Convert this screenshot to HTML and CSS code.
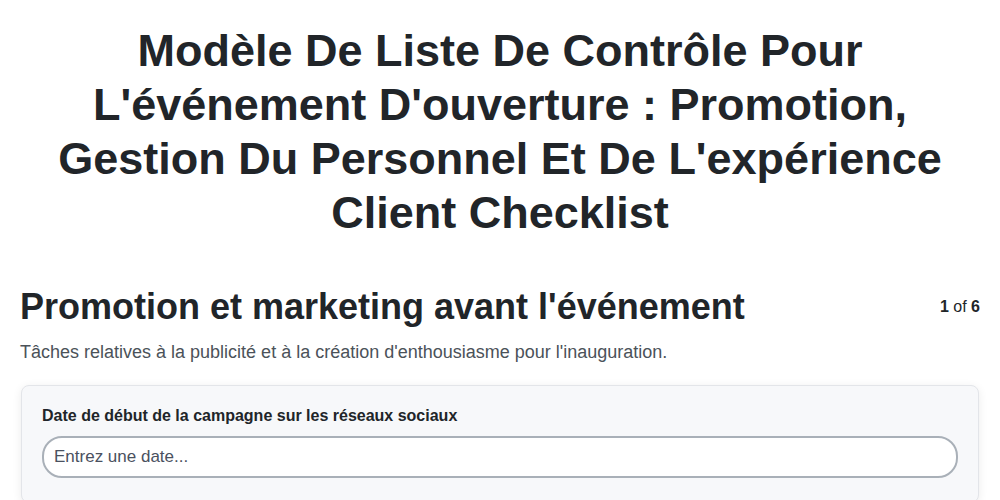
FILE: index.html
```html
<!DOCTYPE html>
<html lang="fr">
<head>
<meta charset="utf-8">
<title>Checklist</title>
<link rel="stylesheet" href="styles.css">
</head>
<body>
<div class="page">
  <h1 class="title">Modèle De Liste De Contrôle Pour L'événement D'ouverture : Promotion, Gestion Du Personnel Et De L'expérience Client Checklist</h1>
  <div class="section-head">
    <h2 class="section-title">Promotion et marketing avant l'événement</h2>
    <div class="pager"><b>1</b> of <b>6</b></div>
  </div>
  <p class="section-desc">Tâches relatives à la publicité et à la création d'enthousiasme pour l'inauguration.</p>
  <div class="card">
    <label class="field-label" for="d1">Date de début de la campagne sur les réseaux sociaux</label>
    <input class="field-input" id="d1" type="text" placeholder="Entrez une date...">
  </div>
</div>
</body>
</html>
```
FILE: styles.css
```css
* { box-sizing: border-box; }
body {
  margin: 0;
  font-family: "Liberation Sans", Arial, sans-serif;
  color: #212529;
  background: #fff;
}
.page {
  padding: 24px 20px 0 20px;
}
.title {
  margin: 0 20px;
  text-align: center;
  font-size: 45px;
  line-height: 54px;
  font-weight: 700;
}
.section-head {
  display: flex;
  justify-content: space-between;
  align-items: center;
  margin-top: 45px;
}
.section-title {
  margin: 0;
  font-size: 36px;
  line-height: 44px;
  font-weight: 700;
}
.pager {
  font-size: 16px;
  color: #212529;
}
.section-desc {
  margin: 11px 0 0 0;
  font-size: 18px;
  color: #4b5259;
  line-height: 24px;
}
.card {
  margin-top: 21px;
  margin-left: 1px;
  background: #f7f8fa;
  border: 1px solid #e3e5e9;
  border-radius: 8px;
  box-shadow: 0 2px 10px rgba(0,0,0,0.08);
  padding: 20px 20px 24px 20px;
  width: 958px;
}
.field-label {
  display: block;
  font-size: 16px;
  font-weight: 700;
  line-height: 20px;
  margin-bottom: 10px;
}
.field-input {
  display: block;
  width: 100%;
  height: 42px;
  border: 2px solid #a9b0b8;
  border-radius: 20px;
  padding: 0 10px;
  font-family: "Liberation Sans", Arial, sans-serif;
  font-size: 17px;
  color: #212529;
  background: #fff;
}
.field-input::placeholder { color: #4a5160; }
```
